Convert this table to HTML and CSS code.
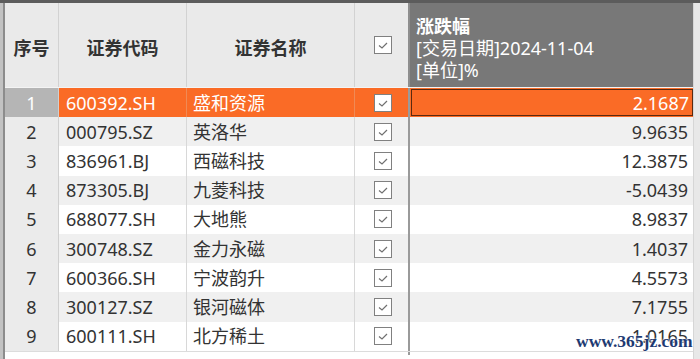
FILE: index.html
```html
<!DOCTYPE html>
<html lang="zh-CN">
<head>
<meta charset="utf-8">
<title>涨跌幅</title>
<link rel="stylesheet" href="styles.css">
</head>
<body>
<div class="app">
  <div class="topbar"></div>
  <div class="main">
    <div class="leftchrome"><div class="grip"></div><div class="edge"></div></div>
    <div class="table">
      <div class="row head">
        <div class="cell seq">序号</div>
        <div class="cell">证券代码</div>
        <div class="cell">证券名称</div>
        <div class="cell chk"><svg class="cb" width="18" height="18" viewBox="0 0 18 18"><rect x="0.5" y="0.5" width="17" height="17" fill="#fff" stroke="#808080"/><polyline points="5,9.5 8,12 13,7" fill="none" stroke="#707070" stroke-width="1.2"/></svg></div>
        <div class="cell valhead">
          <div class="vh1">涨跌幅</div>
          <div>[交易日期]2024-11-04</div>
          <div>[单位]%</div>
        </div>
      </div>
      <div class="row sel">
        <div class="cell seq">1</div>
        <div class="cell code">600392.SH</div>
        <div class="cell name">盛和资源</div>
        <div class="cell chk"><svg class="cb" width="18" height="18" viewBox="0 0 18 18"><rect x="0.5" y="0.5" width="17" height="17" fill="#fff" stroke="#808080"/><polyline points="5,9.5 8,12 13,7" fill="none" stroke="#707070" stroke-width="1.2"/></svg></div>
        <div class="cell val">2.1687</div>
      </div>
      <div class="row even">
        <div class="cell seq">2</div>
        <div class="cell code">000795.SZ</div>
        <div class="cell name">英洛华</div>
        <div class="cell chk"><svg class="cb" width="18" height="18" viewBox="0 0 18 18"><rect x="0.5" y="0.5" width="17" height="17" fill="#fff" stroke="#808080"/><polyline points="5,9.5 8,12 13,7" fill="none" stroke="#707070" stroke-width="1.2"/></svg></div>
        <div class="cell val">9.9635</div>
      </div>
      <div class="row">
        <div class="cell seq">3</div>
        <div class="cell code">836961.BJ</div>
        <div class="cell name">西磁科技</div>
        <div class="cell chk"><svg class="cb" width="18" height="18" viewBox="0 0 18 18"><rect x="0.5" y="0.5" width="17" height="17" fill="#fff" stroke="#808080"/><polyline points="5,9.5 8,12 13,7" fill="none" stroke="#707070" stroke-width="1.2"/></svg></div>
        <div class="cell val">12.3875</div>
      </div>
      <div class="row even">
        <div class="cell seq">4</div>
        <div class="cell code">873305.BJ</div>
        <div class="cell name">九菱科技</div>
        <div class="cell chk"><svg class="cb" width="18" height="18" viewBox="0 0 18 18"><rect x="0.5" y="0.5" width="17" height="17" fill="#fff" stroke="#808080"/><polyline points="5,9.5 8,12 13,7" fill="none" stroke="#707070" stroke-width="1.2"/></svg></div>
        <div class="cell val">-5.0439</div>
      </div>
      <div class="row">
        <div class="cell seq">5</div>
        <div class="cell code">688077.SH</div>
        <div class="cell name">大地熊</div>
        <div class="cell chk"><svg class="cb" width="18" height="18" viewBox="0 0 18 18"><rect x="0.5" y="0.5" width="17" height="17" fill="#fff" stroke="#808080"/><polyline points="5,9.5 8,12 13,7" fill="none" stroke="#707070" stroke-width="1.2"/></svg></div>
        <div class="cell val">8.9837</div>
      </div>
      <div class="row even">
        <div class="cell seq">6</div>
        <div class="cell code">300748.SZ</div>
        <div class="cell name">金力永磁</div>
        <div class="cell chk"><svg class="cb" width="18" height="18" viewBox="0 0 18 18"><rect x="0.5" y="0.5" width="17" height="17" fill="#fff" stroke="#808080"/><polyline points="5,9.5 8,12 13,7" fill="none" stroke="#707070" stroke-width="1.2"/></svg></div>
        <div class="cell val">1.4037</div>
      </div>
      <div class="row">
        <div class="cell seq">7</div>
        <div class="cell code">600366.SH</div>
        <div class="cell name">宁波韵升</div>
        <div class="cell chk"><svg class="cb" width="18" height="18" viewBox="0 0 18 18"><rect x="0.5" y="0.5" width="17" height="17" fill="#fff" stroke="#808080"/><polyline points="5,9.5 8,12 13,7" fill="none" stroke="#707070" stroke-width="1.2"/></svg></div>
        <div class="cell val">4.5573</div>
      </div>
      <div class="row even">
        <div class="cell seq">8</div>
        <div class="cell code">300127.SZ</div>
        <div class="cell name">银河磁体</div>
        <div class="cell chk"><svg class="cb" width="18" height="18" viewBox="0 0 18 18"><rect x="0.5" y="0.5" width="17" height="17" fill="#fff" stroke="#808080"/><polyline points="5,9.5 8,12 13,7" fill="none" stroke="#707070" stroke-width="1.2"/></svg></div>
        <div class="cell val">7.1755</div>
      </div>
      <div class="row">
        <div class="cell seq">9</div>
        <div class="cell code">600111.SH</div>
        <div class="cell name">北方稀土</div>
        <div class="cell chk"><svg class="cb" width="18" height="18" viewBox="0 0 18 18"><rect x="0.5" y="0.5" width="17" height="17" fill="#fff" stroke="#808080"/><polyline points="5,9.5 8,12 13,7" fill="none" stroke="#707070" stroke-width="1.2"/></svg></div>
        <div class="cell val">1.0165</div>
      </div>
      <div class="foot">
        <div class="fseq"></div>
        <div></div>
        <div></div>
        <div class="fchk"></div>
        <div></div>
      </div>
    </div>
    <div class="rightstrip"></div>
  </div>
  <div class="watermark">www.365jz.com</div>
</div>
</body>
</html>
```
FILE: styles.css
```css
* { box-sizing: border-box; }
html, body { margin: 0; padding: 0; background: #fff; }
body {
  font-family: "Noto Sans", "Noto Sans CJK SC", sans-serif;
  font-size: 18px;
  color: #333;
}
.app {
  position: relative;
  width: 700px;
  height: 359px;
  overflow: hidden;
  display: flex;
  flex-direction: column;
}
.topbar { height: 3px; background: #5c5c5c; flex: none; }
.main { flex: 1; display: flex; min-height: 0; }
.leftchrome { width: 5px; display: flex; flex: none; }
.grip {
  width: 3px;
  background: #c2c2c2;
}
.edge { width: 2px; background: #8c8c8c; }
.table { width: 688px; display: flex; flex-direction: column; }
.row {
  display: grid;
  grid-template-columns: 54px 128px 168px 55px 283px;
  height: 29.2px;
  background: #fff;
}
.row.even { background: #f0f0f0; }
.cell {
  display: flex;
  align-items: center;
  border-right: 1px solid #d8d8d8;
  white-space: nowrap;
  line-height: 1;
}
.cell.seq {
  justify-content: center;
  background: #ebebeb;
  border-right-color: #d0d0d0;
}
.cell.code { padding-left: 7px; }
.cell.name { padding-left: 6px; }
.cell.chk {
  justify-content: center;
  padding-left: 2px;
  border-right: 2px solid #9a9a9a;
}
.cell.val {
  justify-content: flex-end;
  padding-right: 5px;
  border-right: none;
}
.cb { display: block; }

.row.head {
  height: 85px;
  background: #eaeaea;
  border-bottom: 1px solid #f4f4f4;
}
.row.head .cell {
  justify-content: center;
  font-weight: bold;
  padding-top: 6px;
  border-right-color: #d2d2d2;
}
.row.head .cell.seq { background: #eaeaea; }
.row.head .cell.chk { padding-top: 0; padding-left: 2px; border-right: 2px solid #8e8e8e; }
.row.head .cell.valhead {
  display: block;
  background: #787878;
  color: #fff;
  font-weight: normal;
  padding: 12px 0 0 6px;
  line-height: 22px;
  border-right: none;
}
.vh1 { font-weight: bold; }

.row.sel { background: #fa6b26; color: #fff; }
.row.sel .cell { border-right-color: #f08a55; }
.row.sel .cell.seq { background: #b5b5b5; color: #fff; border-right-color: #d0d0d0; }
.row.sel .cell.chk { border-right: 2px solid #9a9a9a; }
.row.sel .cell.val {
  outline: 1px solid #5a2a10;
  outline-offset: -2px;
  margin-right: -1px;
}

.foot {
  flex: 1;
  display: grid;
  grid-template-columns: 54px 128px 168px 55px 283px;
  border-top: 1px solid #dcdcdc;
  background: #fff;
}
.fchk { border-right: 2px solid #9a9a9a; height: 3px; }
.rightstrip {
  width: 7px;
  flex: none;
  background: #e8e8e8;
  border-left: 1px solid #d6d6d6;
}
.watermark {
  position: absolute;
  left: 576px;
  top: 331px;
  font-family: "Liberation Serif", serif;
  font-weight: bold;
  font-size: 17.5px;
  color: #1e3a72;
  text-shadow: 0 0 2px #fff, 0 0 2px #fff;
}
```
